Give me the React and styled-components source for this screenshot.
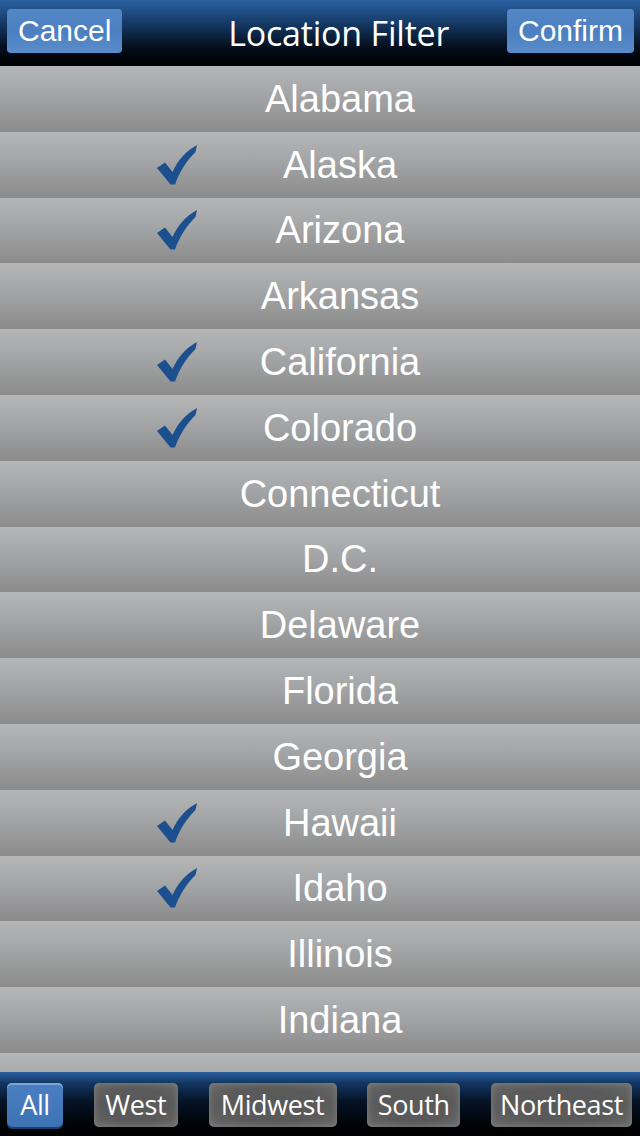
import React from "react";
import styled, { createGlobalStyle } from "styled-components";

const Global = createGlobalStyle`
  html, body { margin: 0; padding: 0; background: #000; }
  body { width: 640px; height: 1136px; overflow: hidden; }
`;

const Screen = styled.div`
  width: 640px;
  height: 1136px;
  display: flex;
  flex-direction: column;
  overflow: hidden;
  background: #8c8c8c;
`;

const Header = styled.header`
  height: 66px;
  flex: none;
  display: flex;
  align-items: center;
  padding: 0 6px 4px 7px;
  box-sizing: border-box;
  background: linear-gradient(to bottom, #2b62a2 0%, #153a66 35%, #05101f 70%, #000 100%);
`;

const NavButton = styled.button`
  height: 44px;
  padding: 0 11px;
  border: none;
  border-radius: 4px;
  background: linear-gradient(to bottom, #5387c7 0%, #4b7fc0 50%, #5a8ccb 100%);
  color: #fff;
  font-family: "Liberation Sans", Arial, sans-serif;
  font-size: 30px;
  line-height: 44px;
  flex: none;
`;

const Title = styled.h1`
  flex: 1;
  margin: 0;
  padding: 4px 0 0 48px;
  text-align: center;
  color: #fff;
  font-family: "Open Sans", sans-serif;
  font-weight: 400;
  font-size: 34px;
  letter-spacing: -0.2px;
  line-height: 1;
`;

const List = styled.div`
  flex: 1;
  overflow: hidden;
`;

const Row = styled.div`
  height: 65.8px;
  display: grid;
  grid-template-columns: 157px 40px 1fr 157px;
  align-items: center;
  background: linear-gradient(to bottom, #b5b6b8 0%, #a3a4a6 45%, #8b8b8b 100%);
`;

const Name = styled.span`
  grid-column: 3;
  grid-row: 1;
  justify-self: center;
  white-space: nowrap;
  color: #fff;
  font-family: "Liberation Sans", Arial, sans-serif;
  font-size: 38px;
  line-height: 1;
`;

const CheckBox = styled.span`
  grid-column: 2;
  grid-row: 1;
  display: flex;
  align-items: center;
  justify-content: center;
  width: 40px;
  height: 40px;
`;

const Footer = styled.footer`
  height: 64px;
  flex: none;
  display: flex;
  align-items: center;
  justify-content: space-between;
  padding: 1px 8px 0 7px;
  box-sizing: border-box;
  background: linear-gradient(to bottom, #2b5fa0 0%, #123560 18%, #061427 45%, #02060c 75%, #000 100%);
`;

const Tab = styled.button`
  height: 44px;
  padding: 0 6px;
  border: none;
  border-radius: 5px;
  font-family: "Open Sans", sans-serif;
  font-size: 27px;
  letter-spacing: -0.4px;
  color: #fff;
  line-height: 44px;
  background: ${(p) =>
    p.$active
      ? "linear-gradient(to bottom, #4a80c2 0%, #3d72b4 100%)"
      : "radial-gradient(ellipse at center, #5a5a5a 55%, #6a6a6a 100%)"};
  box-shadow: ${(p) =>
    p.$active
      ? "inset 0 2px 0 #7aa6dc, 0 2px 0 #1b3f6c"
      : "inset 0 0 6px rgba(150,150,150,0.6)"};
  min-width: ${(p) => p.$min || 0}px;
`;

const Check = () => (
  <svg width="40" height="40" viewBox="0 0 40 40">
    <path
      d="M0 23 L8 17.5 L15.5 27 C21 15 29 6 40 0 L38.5 7 C30 15 22.5 27 18 39.5 L13.5 39.5 Z"
      fill="#1c4f8e"
    />
  </svg>
);

const states = [
  ["Alabama", false],
  ["Alaska", true],
  ["Arizona", true],
  ["Arkansas", false],
  ["California", true],
  ["Colorado", true],
  ["Connecticut", false],
  ["D.C.", false],
  ["Delaware", false],
  ["Florida", false],
  ["Georgia", false],
  ["Hawaii", true],
  ["Idaho", true],
  ["Illinois", false],
  ["Indiana", false],
  ["Iowa", false],
];

const tabs = [
  { label: "All", active: true, min: 56 },
  { label: "West", min: 84 },
  { label: "Midwest", min: 128 },
  { label: "South", min: 93 },
  { label: "Northeast", min: 141 },
];

export default function App() {
  return (
    <>
      <Global />
      <Screen>
        <Header>
          <NavButton>Cancel</NavButton>
          <Title>Location Filter</Title>
          <NavButton>Confirm</NavButton>
        </Header>
        <List>
          {states.map(([name, checked]) => (
            <Row key={name}>
              {checked && (
                <CheckBox>
                  <Check />
                </CheckBox>
              )}
              <Name>{name}</Name>
            </Row>
          ))}
        </List>
        <Footer>
          {tabs.map((t) => (
            <Tab key={t.label} $active={t.active} $min={t.min}>
              {t.label}
            </Tab>
          ))}
        </Footer>
      </Screen>
    </>
  );
}
